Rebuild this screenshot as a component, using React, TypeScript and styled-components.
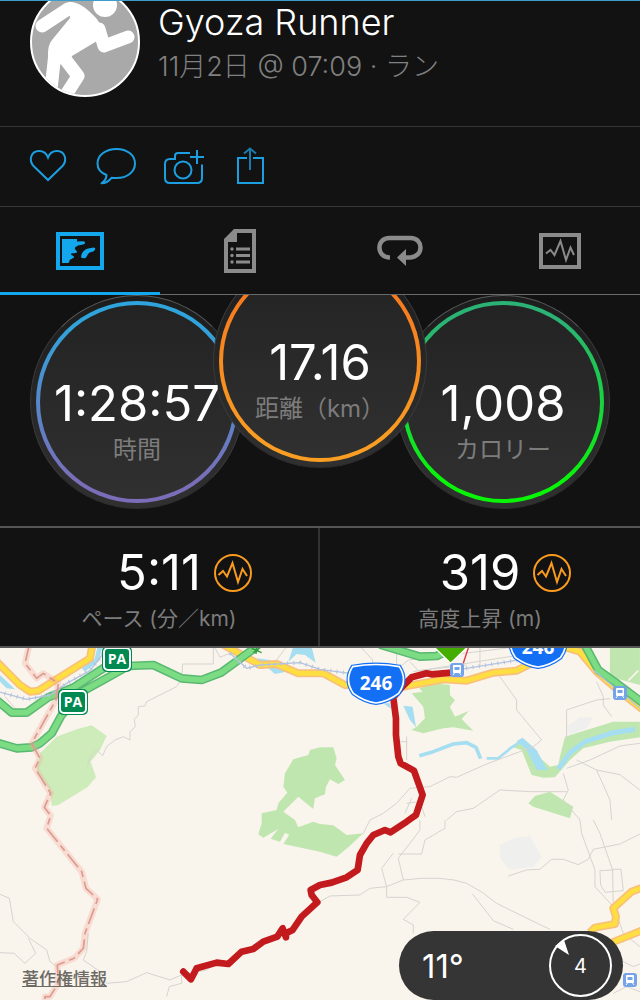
import React from 'react'
import styled, { createGlobalStyle } from 'styled-components'

const GlobalStyle = createGlobalStyle`
  * {
    box-sizing: border-box;
  }
  body {
    margin: 0;
    background: #121212;
    color: #fff;
    font-family: Inter, 'Noto Sans CJK JP', sans-serif;
  }
  button {
    display: block;
    padding: 0;
    border: 0;
    background: none;
    color: inherit;
    font: inherit;
    cursor: pointer;
  }
  svg {
    display: block;
  }
`

const StyledHeader = styled.header`
  display: flex;
  gap: 18px;
  height: 127px;
  padding: 0 30px;
  overflow: hidden;
  border-top: 1px solid #3d9cc9;
  border-bottom: 1px solid #333;
`
const StyledAvatar = styled.div`
  flex: none;
  width: 110px;
  height: 110px;
  margin-top: -14px;
  overflow: hidden;
  border: 2px solid #fff;
  border-radius: 50%;
  background: #a9a9a9;
`
const StyledName = styled.h1`
  margin: 0;
  font-size: 36px;
  font-weight: 300;
  line-height: 42px;
`
const StyledSubtitle = styled.p`
  margin: 6px 0 0;
  color: #808080;
  font-size: 27px;
  font-weight: 300;
  line-height: 36px;
`

const StyledActions = styled.div`
  display: flex;
  align-items: center;
  gap: 28px;
  height: 80px;
  padding: 0 28px;
  border-bottom: 1px solid #383838;
  color: #1c9fe0;
`

const StyledTabs = styled.nav`
  display: grid;
  grid-template-columns: repeat(4, 1fr);
  height: 88px;
  border-bottom: 1px solid #6a6a6a;
`
const StyledTab = styled.button<{ $active?: boolean }>`
  position: relative;
  display: flex;
  align-items: center;
  justify-content: center;
  color: ${props => (props.$active ? '#13a8ee' : '#8b8b8b')};

  &::after {
    content: '';
    position: absolute;
    right: 0;
    bottom: -1px;
    left: 0;
    height: 3px;
    background: ${props => (props.$active ? '#13a8ee' : 'transparent')};
  }
`

const StyledDials = styled.section`
  display: flex;
  justify-content: center;
  height: 233px;
  overflow: hidden;
  border-bottom: 2px solid #555;
`
const StyledDial = styled.div<{ $raised?: boolean }>`
  flex: none;
  width: 214px;
  height: 214px;
  margin: ${props => (props.$raised ? '-41px -31px 0' : '0')};
  padding: 5px;
  border: 1px solid #3a3a3a;
  border-top-color: #5a5a5a;
  border-bottom-color: #2c2c2c;
  border-radius: 50%;
  background: linear-gradient(#1d1d1d, #303030);
  ${props => props.$raised && 'position: relative; z-index: 1;'}
`
const StyledRing = styled.div<{ $from: string; $to: string }>`
  display: flex;
  flex-direction: column;
  align-items: center;
  justify-content: center;
  height: 100%;
  padding-top: 39px;
  border: 4px solid transparent;
  border-radius: 50%;
  background:
    linear-gradient(#232323, #303030) padding-box,
    linear-gradient(${props => props.$from} 10%, ${props => props.$to} 90%) border-box;
`
const StyledValue = styled.div`
  position: relative;
  z-index: 2;
  font-size: 49px;
  line-height: 56px;
  white-space: nowrap;
`
const StyledLabel = styled.div`
  color: #7c7c7c;
  font-size: 24px;
  font-weight: 400;
  line-height: 36px;
  white-space: nowrap;
`

const StyledStats = styled.section`
  display: grid;
  grid-template-columns: 1fr 1fr;
  height: 120px;
  border-bottom: 2px solid #555;
`
const StyledStat = styled.div`
  padding-top: 17px;
  text-align: center;

  &:first-child {
    border-right: 2px solid #333;
  }
`
const StyledStatRow = styled.div`
  display: grid;
  grid-template-columns: 1fr auto 1fr;
  gap: 13px;
  align-items: center;
`
const StyledStatLabel = styled(StyledLabel)`
  font-size: 21px;
`

const StyledMap = styled.section`
  position: relative;
  overflow: hidden;
  background: #f9f4ec;
`
const StyledLegal = styled.a`
  position: absolute;
  bottom: 9px;
  left: 22px;
  color: #6d6a65;
  font-size: 17px;
  font-weight: 500;
  line-height: 24px;
`
const StyledWeather = styled.div`
  position: absolute;
  right: 17px;
  bottom: 0;
  display: flex;
  align-items: center;
  justify-content: space-between;
  width: 224px;
  height: 69px;
  padding: 0 11px 0 23px;
  border-radius: 35px;
  background: #353535;
  font-size: 33px;
`
const StyledWind = styled.div`
  position: relative;
  display: flex;
  align-items: center;
  justify-content: center;
  width: 63px;
  height: 63px;
  border: 2px solid #fff;
  border-radius: 50%;
  font-size: 20px;

  svg {
    position: absolute;
    top: 4px;
    left: 4px;
  }
`

const Runner = () => (
  <svg width="106" height="106" viewBox="2 2 106 106" fill="none" stroke="#fff" strokeWidth="13" strokeLinecap="round" strokeLinejoin="round">
    <circle cx="75" cy="18" r="12" fill="#fff" stroke="none" />
    <path d="M12 39 38 22M69 42 74 59 98 50M25 66 20 112M32 68 48 89 32 114" />
    <path d="M38 15 C48 14 58 22 66 31 C71 37 73 44 72 51 L42 69 38 78 19 76 C17 66 18 58 22 53 L40 31Z" fill="#fff" stroke="none" />
  </svg>
)

const HeartIcon = () => (
  <svg width="40" height="40" fill="none" stroke="currentColor" strokeWidth="2">
    <path d="M20 33 6 19.500C0 13.500 3 4 11 4c4.500 0 7.500 2.500 9 6.500C21.500 6.500 24.500 4 29 4c8 0 11 9.500 5 15.500Z" />
  </svg>
)
const CommentIcon = () => (
  <svg width="40" height="40" fill="none" stroke="currentColor" strokeWidth="2" strokeLinejoin="round">
    <path d="M10.500 28C4 25.500 1.500 21 1.500 16.500 1.500 8 10 2 20.500 2S39 8 39 16.500 31 31 20.500 31c-2 0-3.500 0-5-.2C13 34 9.500 36.300 5.500 36.300 9 34 10.500 31.500 10.500 28Z" />
  </svg>
)
const CameraIcon = () => (
  <svg width="40" height="40" fill="none" stroke="currentColor" strokeWidth="2">
    <path d="M26 6H14q-3 0-3 3v3H6q-5 0-5 5v14q0 5 5 5h27q5 0 5-5V17.500M33 3v14M26 10h14" />
    <circle cx="19" cy="23" r="8.500" />
  </svg>
)
const ShareIcon = () => (
  <svg width="40" height="40" fill="none" stroke="currentColor" strokeWidth="2">
    <path d="M15 11H6v25h25V11H21" />
    <path d="M18 1.500V23M12 6.500l6-5 6 5" opacity=".75" />
  </svg>
)

const MapIcon = () => (
  <svg width="48" height="38" fill="currentColor">
    <path d="M2 2H46V36H2Z" fill="none" stroke="currentColor" strokeWidth="4" />
    <path d="M6 7H21v2.500l6-.2c3 .2 2.500 2.700 0 3.200l-5 1-3 2c-1 2 2 3 2 4.500-.5 2-5 .5-6 2 0 1.500 3 1.500 3 3s-4 2-4.500 3.500V29l-1 2H6Z" />
    <path d="M25.500 26c-1.500-4 3-9 7-9.500 2-.2 5-2 6.500-.5 1 2-1.500 3.500-4 4-4 1-3.500 5-6 6.200Z" />
  </svg>
)
const DocIcon = () => (
  <svg width="32" height="44" fill="currentColor">
    <path fillRule="evenodd" d="M10 0H32V44H0V10ZM13 13H4V40H28V4H13Z" />
    <path d="M12 18.500h14v3H12ZM12 25h14v3H12ZM12 31.500h14v3H12Z" />
    <circle cx="8" cy="20" r="1.700" />
    <circle cx="8" cy="26.500" r="1.700" />
    <circle cx="8" cy="33" r="1.700" />
  </svg>
)
const LapIcon = () => (
  <svg width="46" height="32" fill="none" stroke="currentColor" strokeWidth="4.500">
    <path d="M13 22.500C-1 22.500-1 3 12.500 3h21c13.500 0 13.500 19.500-1 19.500h-5" />
    <path d="M20 22.500 29 14v17Z" fill="currentColor" stroke="none" />
  </svg>
)
const ChartIcon = () => (
  <svg width="42" height="36" fill="none" stroke="currentColor">
    <path d="M2 2H40V34H2Z" strokeWidth="4" />
    <path d="M7 20.500 11.500 17l4 5L21.500 8 27 27l4.500-12.500L35 22" strokeWidth="2" />
  </svg>
)
const PulseBadge = () => (
  <svg width="38" height="38" fill="none" stroke="#f99b1e" strokeWidth="2">
    <circle cx="19" cy="19" r="18" />
    <path d="M4.500 21 9 17l4 5.500L18.500 9 24 28l4.500-13L33 22" />
  </svg>
)

const shieldPath = 'M-70-52Q0-65 70-52Q96-12 68 28Q36 52 0 57Q-36 52-68 28Q-96-12-70-52Z'

const RouteShield: React.FC<{ x: number; y: number }> = ({ x, y }) => (
  <g transform={`translate(${x} ${y})`}>
    <g transform="scale(.3333)">
      <path d={shieldPath} fill="#1370f5" stroke="#1370f5" strokeWidth="12" />
      <path d={shieldPath} fill="none" stroke="#fff" strokeWidth="5" />
    </g>
    <text y="6" fill="#fff" fontSize="19" fontWeight="700" fontFamily="'Open Sans', sans-serif" textAnchor="middle">
      246
    </text>
  </g>
)
const ParkingSign: React.FC<{ x: number; y: number }> = ({ x, y }) => (
  <g transform={`translate(${x} ${y})`}>
    <rect x="-15" y="-13" width="30" height="26" rx="5" fill="#008a52" />
    <rect x="-13" y="-11" width="26" height="22" rx="4" fill="#008a52" stroke="#fff" strokeWidth="2" />
    <text y="5" fill="#fff" fontSize="14" fontWeight="700" fontFamily="'Open Sans', sans-serif" textAnchor="middle">
      PA
    </text>
  </g>
)
const Station: React.FC<{ x: number; y: number }> = ({ x, y }) => (
  <g transform={`translate(${x} ${y})`}>
    <rect x="-7" y="-7" width="14" height="14" rx="3" fill="#75a3ea" />
    <path d="M-3.500-4.500H3.500V2.500H-3.500ZM-2.500 3-4 5M2.500 3 4 5" fill="#fff" stroke="#fff" />
    <path d="M-2.500-3h5V0h-5Z" fill="#75a3ea" />
  </g>
)

const greenRoads =
  'M-10 180 35 218H80L145 172 220 143 330 72M215 172 310 120 385 78 460 75 545 115 605 120 665 97 770 20M-10 308 50 325 95 322 120 310 155 280 185 225 220 190M1140 14 1260 50 1310 48 1370 20M1752 10 1795 90 1850 130 1930 190'
const yellowRoads =
  'M-10 65 60 135 90 155 115 152 270 55 278 10M670 14 780 75 830 72 895 100H970L1035 135H1090M1200 142 1330 118 1400 122 1480 98 1550 92 1620 58M1690 20 1740 35 1790 95 1860 155 1930 210M1770 878 1785 863 1845 852 1848 830 1840 805 1895 755 1930 742M1835 908 1930 870'
const border =
  'M88 14 75 70 110 115 130 100 175 130 168 180 95 310 120 355 105 385 152 460 133 502 152 527 140 565 245 695 258 745 293 778 255 880 250 925 222 955 172 975 175 1030 150 1070H135V1090'
const railway = 'M-5 155 80 178 150 165 200 130 270 92 318 30M690 40 740 85 780 75 900 68 960 88 1050 100M1380 88 1580 56'
const trails =
  'M640 20V72H548L545 115 530 140 440 185 435 198 415 200V225L403 238 406 260 390 275V300L370 290 345 300 320 320 308 347 290 330 270 350 262 380M0 763 28 775 40 845 90 895 140 930 150 965 170 980M85 895 107 940 75 970 42 940 0 938M265 880 260 935 250 960 300 995 320 1030 380 1025 440 998 510 1020 545 1005 545 1030 508 1040 500 1070M545 1005 620 990 660 960M645 24 660 52 700 35M860 20 830 60M1085 24 1118 60 1116 90M1190 30V90L1225 60 1540 22M1240 95 1580 42M1440 24V80M1230 65 1255 92 1400 75M1500 110 1550 180V210L1625 300 1600 320 1460 372 1370 412 1350 410 1290 440 1230 445 1190 490 1150 520 1110 540M1700 300V210L1790 180 1830 176M1790 125 1810 170V195L1835 230M1700 455H1590L1500 450 1420 505 1370 515 1340 540M1690 400 1705 450 1690 480 1740 540M1700 385 1770 360 1860 318 1920 310M1730 360 1790 390 1860 404 1920 450M1790 390 1830 480 1835 540M1220 290V360M1200 305H1222M1740 540 1745 580 1785 690V740L1840 800 1838 690 1800 580 1780 540M1840 690 1800 692 1802 735 1815 757 1870 752 1863 688H1838M1525 708 1580 690 1620 688 1655 658 1690 658 1735 674 1765 658 1780 628 1860 612 1920 582M1260 540V570L1230 610 1195 655 1210 720 1160 740 1110 745 1080 765 990 768 960 785M1210 720Q1330 705 1400 730 1450 755 1490 790 1580 835 1650 868M1418 762 1480 842 1540 868M1195 642H1265L1275 600 1335 565V540M1180 640 1145 685 1160 740V772H1220L1260 787 1210 838 1240 855V880M1235 475 1215 520M1220 490 1260 485 1275 530M1110 540 1090 580M1840 795 1870 880 1920 920M1860 960 1900 980 1920 972M1840 1060 1880 1040 1920 1055M15 170 50 210'

// terrain is drawn on a grid three times as fine as the labels above it
const Terrain = () => (
  <g transform="translate(0 -8) scale(.3333)" fill="none" strokeLinejoin="round">
    <g fill="#eff0ee">
      <path d="M1500 615 1540 595 1590 587 1625 650 1600 680 1530 690 1500 655Z" />
      <path d="M1700 260 1740 232H1780L1760 265 1710 285Z" />
    </g>
    <path d="M120 340 170 290 230 268 275 256 320 288 300 330 272 365 288 412 262 442 175 495 155 498 152 455 110 390Z" fill="#ceebba" />
    <g fill="#c0e6b0">
      <path d="M960 322 1000 322 1010 355 1005 375 1035 420 1015 432 990 418 978 440 975 463 945 475 940 507 895 470 850 515 885 540 895 562 940 545 960 552 1000 556 1040 585 1090 580 1045 622 1010 650 960 635 850 612 868 584 855 578 840 605 812 596 835 567 790 593 775 583 785 550V520L830 510 835 490 862 458 850 440 855 400 880 358 925 345 930 330Z" />
      <path d="M1235 160 1268 155 1258 145 1300 130 1350 135V165L1365 180 1350 200 1365 230 1407 212 1385 237 1420 272 1360 262 1330 265 1270 280 1235 270 1250 260 1275 235 1270 200Z" />
      <path d="M1585 490 1605 468 1650 455 1720 500 1710 535 1600 500Z" />
      <path d="M1830 20H1920V135L1830 110Z" />
      <path d="M1535 320 1560 300 1610 345 1650 380 1675 375 1680 350 1695 290 1760 270 1840 245H1920V292L1830 305 1750 325 1710 360 1665 412 1630 413 1595 405 1565 330Z" />
    </g>
    <path d="M1885 122 1915 92" stroke="#f9f4ec" strokeWidth="5" />
    <g fill="#a6def1">
      <path d="M1210 197 1238 200 1248 262 1230 240Z" />
      <path d="M1550 303 1568 293 1610 330 1642 390H1610L1580 330Z" />
      <path d="M865 65 880 20H935L947 68 915 45 890 42Z" />
      <path d="M1150 190 1175 208 1170 190ZM0 105 45 148 20 145 0 125ZM770 55 810 60 858 95 825 102Z" />
    </g>
    <g stroke="#a6def1">
      <path d="M1258 347 1300 335 1360 312 1400 308 1428 322 1442 356" strokeWidth="11" />
      <path d="M1460 355H1495L1535 322 1568 302" strokeWidth="8" />
      <path d="M1675 387 1710 338 1755 305 1840 278 1905 268" strokeWidth="15" />
      <path d="M300 20 290 60 250 90" strokeWidth="14" />
    </g>
    <path d={trails} stroke="#d6d4d0" strokeWidth="3" />
    <path d={yellowRoads} stroke="#f9bf7c" strokeWidth="24" />
    <path d={yellowRoads} stroke="#ffdf40" strokeWidth="14" />
    <path d={greenRoads} stroke="#59b871" strokeWidth="26" />
    <path d={greenRoads} stroke="#7bdc83" strokeWidth="17" />
    <g stroke="#b2c3e0">
      <path d={railway} strokeWidth="4" />
      <path d={railway} strokeWidth="12" strokeDasharray="3 16" />
      <path d="M1780 90 1920 205" strokeWidth="4" />
    </g>
    <path d={border} stroke="#f5a694" strokeOpacity=".3" strokeWidth="19" />
    <path d={border} stroke="#dc9a90" strokeWidth="5" strokeDasharray="50 14 20 14" />
    <path d="M755 25 785 38M770 20 768 42M782 22 760 38" stroke="#349b43" strokeWidth="4" />
    <path d="M1390 70 1405 24" stroke="#dc3648" strokeWidth="4" />
    <path
      d="M1355 98 1295 103 1280 100 1235 112 1205 142 1180 172 1188 235V285L1195 350 1202 370 1242 392 1268 465 1248 525 1220 545 1172 577 1155 570 1120 585 1100 610 1080 645 1073 690 1040 712 995 728 960 735 932 750 935 765 952 787 905 830 878 870 858 880V892L848 865 832 890 790 905 760 927 725 935 685 972 650 968 590 985 573 1018 550 995"
      stroke="#c31a1e"
      strokeWidth="20"
      strokeLinecap="round"
    />
    <path d="M1295 14H1410L1352 70Z" fill="#45ad00" stroke="#fff" strokeWidth="4" />
  </g>
)

const dials = [
  { value: '1:28:57', label: '時間', from: '#2fa4dc', to: '#7b6db7' },
  { value: '17.16', label: '距離（km）', from: '#f5771f', to: '#f99e22', raised: true },
  { value: '1,008', label: 'カロリー', from: '#2ab375', to: '#08f508' },
]

const stats = [
  { value: '5:11', label: 'ペース (分／km)' },
  { value: '319', label: '高度上昇 (m)' },
]

const actions = [
  { name: 'いいね', Icon: HeartIcon },
  { name: 'コメント', Icon: CommentIcon },
  { name: '写真を追加', Icon: CameraIcon },
  { name: '共有', Icon: ShareIcon },
]

const tabs = [
  { name: '概要', Icon: MapIcon },
  { name: '詳細', Icon: DocIcon },
  { name: 'ラップ', Icon: LapIcon },
  { name: 'チャート', Icon: ChartIcon },
]

const App: React.FC = () => {
  return (
    <main>
      <GlobalStyle />
      <StyledHeader>
        <StyledAvatar>
          <Runner />
        </StyledAvatar>
        <div>
          <StyledName>Gyoza Runner</StyledName>
          <StyledSubtitle>11月2日 @ 07:09 · ラン</StyledSubtitle>
        </div>
      </StyledHeader>

      <StyledActions>
        {actions.map(({ name, Icon }) => (
          <button key={name} type="button" aria-label={name}>
            <Icon />
          </button>
        ))}
      </StyledActions>

      <StyledTabs>
        {tabs.map(({ name, Icon }, index) => (
          <StyledTab key={name} type="button" aria-label={name} $active={index === 0}>
            <Icon />
          </StyledTab>
        ))}
      </StyledTabs>

      <StyledDials>
        {dials.map(dial => (
          <StyledDial key={dial.label} $raised={dial.raised}>
            <StyledRing $from={dial.from} $to={dial.to}>
              <StyledValue>{dial.value}</StyledValue>
              <StyledLabel>{dial.label}</StyledLabel>
            </StyledRing>
          </StyledDial>
        ))}
      </StyledDials>

      <StyledStats>
        {stats.map(stat => (
          <StyledStat key={stat.label}>
            <StyledStatRow>
              <span />
              <StyledValue>{stat.value}</StyledValue>
              <PulseBadge />
            </StyledStatRow>
            <StyledStatLabel>{stat.label}</StyledStatLabel>
          </StyledStat>
        ))}
      </StyledStats>

      <StyledMap>
        <svg viewBox="0 0 640 352" width="100%">
          <Terrain />
          <ParkingSign x={117} y={11} />
          <ParkingSign x={73} y={54} />
          <Station x={457} y={22} />
          <Station x={620} y={45} />
          <Station x={630} y={332} />
          <RouteShield x={376} y={36} />
          <RouteShield x={538} y={0} />
        </svg>
        <StyledLegal href="#legal">著作権情報</StyledLegal>
        <StyledWeather>
          <span>11°</span>
          <StyledWind>
            4
            <svg width="16" height="16">
              <path d="M0 6 9 0 14 15Z" fill="#fff" />
            </svg>
          </StyledWind>
        </StyledWeather>
      </StyledMap>
    </main>
  )
}

export default App
